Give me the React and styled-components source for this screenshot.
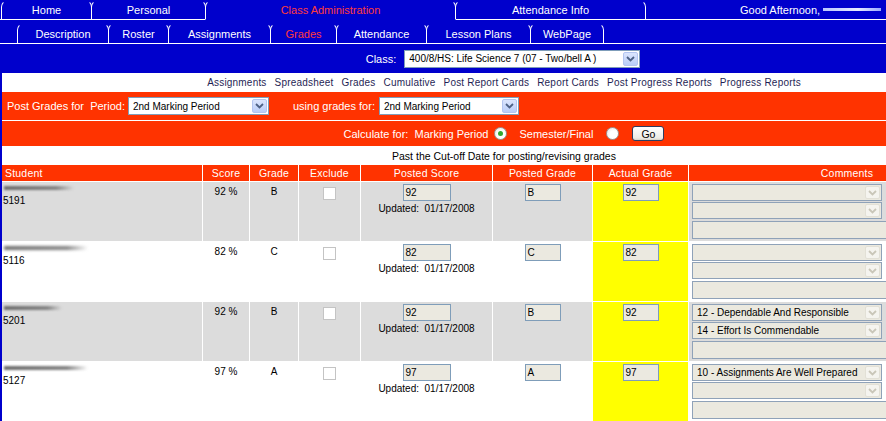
import React from "react";
import styled, { createGlobalStyle, css } from "styled-components";

const BLUE = "#0000cc";
const RED = "#ff3300";

const GlobalStyle = createGlobalStyle`
  html, body {
    margin: 0;
    padding: 0;
    background: ${BLUE};
    overflow: hidden;
  }
  body {
    font-family: "Liberation Sans", Arial, sans-serif;
  }
`;

const Page = styled.div`
  width: 1006px;
`;

const TopRow = styled.div`
  display: flex;
  height: 19px;
  padding-left: 2px;
  border-bottom: 1px solid #fff;
`;

const SubRow = styled.div`
  display: flex;
  align-items: flex-end;
  height: 23px;
  padding-left: 18px;
  border-bottom: 1px solid #fff;
`;

const Tab = styled.div`
  width: ${(p) => p.$w}px;
  height: ${(p) => p.$h}px;
  box-sizing: border-box;
  margin-left: -1px;
  border: 1px solid #fff;
  border-top-color: transparent;
  border-bottom: none;
  border-radius: 7px 7px 0 0;
  display: flex;
  align-items: center;
  justify-content: center;
  font-size: 11px;
  color: ${(p) => (p.$active ? "#ff3b3b" : "#fff")};
  white-space: nowrap;
  ${(p) =>
    p.$active &&
    p.$cover &&
    css`
      height: ${p.$h + 1}px;
      margin-bottom: -1px;
      border-bottom: 1px solid ${BLUE};
    `}
`;

const Greeting = styled.div`
  display: flex;
  align-items: center;
  margin-left: 94px;
  font-size: 11px;
  color: #fff;
  white-space: nowrap;
`;

const NameSmear = styled.span`
  display: inline-block;
  width: ${(p) => p.$w}px;
  height: 3px;
  margin-left: 3px;
  background: linear-gradient(to right, #b8c4ff, #e6ebff 60%, #9aa8ff);
  filter: blur(0.7px);
`;

const ClassBar = styled.div`
  height: 29px;
  display: flex;
  align-items: center;
  justify-content: center;
  gap: 8px;
  font-size: 11px;
  color: #fff;
`;

const Content = styled.div`
  margin-left: 2px;
  width: 1004px;
`;

const LinkBar = styled.div`
  height: 19px;
  background: #fff;
  display: flex;
  align-items: center;
  justify-content: center;
  gap: 8px;
  font-size: 10px;
  letter-spacing: 0.2px;
  color: #1f1f55;
`;

const RedBar = styled.div`
  background: ${RED};
  height: ${(p) => p.$h}px;
  display: flex;
  align-items: center;
  justify-content: ${(p) => (p.$center ? "center" : "flex-start")};
  padding-left: ${(p) => (p.$center ? 0 : 5)}px;
  font-size: 11px;
  color: #fff;
  white-space: pre;
  ${(p) => p.$line && "border-bottom: 1px solid #fff;"}
`;

const BarLabel = styled.span`
  margin-left: ${(p) => p.$ml || 0}px;
  margin-right: ${(p) => p.$mr || 0}px;
`;

const Notice = styled.div`
  height: 19px;
  background: #fff;
  display: flex;
  align-items: center;
  justify-content: center;
  font-size: 10.5px;
  color: #000;
`;

const SelectBox = styled.div`
  box-sizing: border-box;
  width: ${(p) => p.$w}px;
  height: ${(p) => p.$h}px;
  display: flex;
  align-items: center;
  border: 1px solid ${(p) => (p.$disabled ? "#8fa2b8" : "#7f9db9")};
  background: ${(p) => (p.$disabled ? "#ebe9df" : "#fff")};
  font-size: 10px;
  color: #000;
`;

const SelectText = styled.span`
  flex: 1;
  padding-left: 4px;
  white-space: nowrap;
  overflow: hidden;
`;

const ArrowBtn = styled.span`
  box-sizing: border-box;
  width: 15px;
  align-self: stretch;
  margin: 1px;
  display: flex;
  align-items: center;
  justify-content: center;
  border-radius: 2px;
  ${(p) =>
    p.$disabled
      ? css`
          background: #f5f4ef;
          border: 1px solid #e2e0d6;
        `
      : css`
          background: linear-gradient(#dbe5fd, #b9cdf8);
          border: 1px solid #b3c5f0;
        `}
`;

const Radio = styled.span`
  box-sizing: border-box;
  width: 13px;
  height: 13px;
  border-radius: 50%;
  border: 1px solid #9a9a9a;
  background: radial-gradient(circle at 60% 60%, #fff 40%, #e4e4e0);
  display: inline-flex;
  align-items: center;
  justify-content: center;
  margin: 0 ${(p) => p.$mr}px 0 ${(p) => p.$ml}px;
`;

const Dot = styled.span`
  width: 5px;
  height: 5px;
  border-radius: 50%;
  background: #2fa82f;
`;

const GoButton = styled.span`
  box-sizing: border-box;
  width: 32px;
  height: 15px;
  display: inline-flex;
  align-items: center;
  justify-content: center;
  border: 1px solid #2c3e62;
  border-radius: 3px;
  background: linear-gradient(#ffffff, #ecebe6 85%, #d6d0c5);
  font-size: 10.5px;
  color: #000;
`;

const COLS = "200px 46px 48px 61px 131px 99px 95px 316px";

const Grid = styled.div`
  display: flex;
  flex-direction: column;
  gap: 1px;
  background: #fff;
`;

const Row = styled.div`
  display: grid;
  grid-template-columns: ${COLS};
  column-gap: 1px;
  height: ${(p) => (p.$head ? 16 : 59)}px;
`;

const HeadCell = styled.div`
  background: ${RED};
  color: #fff;
  font-size: 10.5px;
  letter-spacing: 0.2px;
  display: flex;
  align-items: center;
  justify-content: ${(p) => (p.$left ? "flex-start" : "center")};
  padding-left: ${(p) => (p.$left ? 3 : 0)}px;
`;

const Cell = styled.div`
  background: ${(p) => (p.$yellow ? "#ffff00" : p.$alt ? "#dcdcdc" : "#fff")};
  font-size: 10px;
  color: #000;
  display: flex;
  flex-direction: column;
  align-items: ${(p) => (p.$left ? "flex-start" : "center")};
  padding: ${(p) => p.$pt ?? 2}px 0 0 ${(p) => (p.$left ? 1 : 0)}px;
  overflow: hidden;
`;

const NameBlur = styled.span`
  display: block;
  width: ${(p) => p.$w}px;
  height: 4px;
  margin: 4px 0 0 1px;
  background: linear-gradient(to right, #6e6e6e, #858585 75%, rgba(150, 150, 150, 0));
  filter: blur(${(p) => p.$blur}px);
`;

const StudentId = styled.span`
  margin-top: 5px;
`;

const Check = styled.span`
  box-sizing: border-box;
  width: 13px;
  height: 13px;
  margin-top: 3px;
  background: #fff;
  border: 1px solid #c4c4c4;
`;

const Field = styled.div`
  box-sizing: border-box;
  width: ${(p) => p.$w}px;
  height: 17px;
  border: 1px solid #7f9db9;
  background: #ebe9e0;
  padding-left: 2px;
  font-size: 10px;
  line-height: 15px;
  color: #000;
`;

const Updated = styled.span`
  margin-top: 2px;
  white-space: pre;
`;

const CommentStack = styled.div`
  display: flex;
  flex-direction: column;
  gap: 1px;
  padding-left: 2px;
`;

const TextBox = styled.div`
  box-sizing: border-box;
  width: 330px;
  height: 18px;
  margin-top: 1px;
  border: 1px solid #8fa2b8;
  background: #ebe9df;
`;

const Chevron = ({ disabled }) => (
  <svg width="9" height="6" viewBox="0 0 9 6">
    <path
      d="M1 1 L4.5 4.5 L8 1"
      fill="none"
      stroke={disabled ? "#c9c6b8" : "#4d6185"}
      strokeWidth="1.8"
    />
  </svg>
);

const Select = ({ w, h = 17, value, disabled }) => (
  <SelectBox $w={w} $h={h} $disabled={disabled}>
    <SelectText>{value}</SelectText>
    <ArrowBtn $disabled={disabled}>
      <Chevron disabled={disabled} />
    </ArrowBtn>
  </SelectBox>
);

const mainTabs = [
  { label: "Home", w: 91 },
  { label: "Personal", w: 115 },
  { label: "Class Administration", w: 251, active: true },
  { label: "Attendance Info", w: 191 },
];

const subTabs = [
  { label: "Description", w: 92 },
  { label: "Roster", w: 61 },
  { label: "Assignments", w: 103 },
  { label: "Grades", w: 67, active: true },
  { label: "Attendance", w: 91 },
  { label: "Lesson Plans", w: 105 },
  { label: "WebPage", w: 74 },
];

const links = [
  "Assignments",
  "Spreadsheet",
  "Grades",
  "Cumulative",
  "Post Report Cards",
  "Report Cards",
  "Post Progress Reports",
  "Progress Reports",
];

const students = [
  { id: "5191", blur: 70, soft: 0.8, score: "92 %", grade: "B", posted: "92", actual: "92", comments: ["", ""] },
  { id: "5116", blur: 84, soft: 1.4, score: "82 %", grade: "C", posted: "82", actual: "82", comments: ["", ""] },
  { id: "5201", blur: 58, soft: 0.8, score: "92 %", grade: "B", posted: "92", actual: "92", comments: ["12 - Dependable And Responsible", "14 - Effort Is Commendable"] },
  { id: "5127", blur: 84, soft: 0.8, score: "97 %", grade: "A", posted: "97", actual: "97", comments: ["10 - Assignments Are Well Prepared", ""] },
];

const headers = ["Student", "Score", "Grade", "Exclude", "Posted Score", "Posted Grade", "Actual Grade", "Comments"];

export default function App() {
  return (
    <Page>
      <GlobalStyle />
      <TopRow>
        {mainTabs.map((t) => (
          <Tab key={t.label} $w={t.w} $h={19} $active={t.active} $cover>
            {t.label}
          </Tab>
        ))}
        <Greeting>
          Good Afternoon,
          <NameSmear $w={58} />
        </Greeting>
      </TopRow>
      <SubRow>
        {subTabs.map((t) => (
          <Tab key={t.label} $w={t.w} $h={20} $active={t.active}>
            {t.label}
          </Tab>
        ))}
      </SubRow>
      <ClassBar>
        Class:
        <Select w={236} h={18} value="400/8/HS: Life Science 7 (07 - Two/bell A )" />
      </ClassBar>
      <Content>
        <LinkBar>
          {links.map((l) => (
            <span key={l}>{l}</span>
          ))}
        </LinkBar>
        <RedBar $h={28} $line>
          <BarLabel $mr={3}>{"Post Grades for  Period:"}</BarLabel>
          <Select w={141} h={18} value="2nd Marking Period" />
          <BarLabel $ml={24} $mr={4}>{"using grades for:"}</BarLabel>
          <Select w={140} h={18} value="2nd Marking Period" />
        </RedBar>
        <RedBar $h={25} $center>
          {"Calculate for:  Marking Period"}
          <Radio $ml={6} $mr={12}>
            <Dot />
          </Radio>
          Semester/Final
          <Radio $ml={13} $mr={13} />
          <GoButton>Go</GoButton>
        </RedBar>
        <Notice>Past the Cut-off Date for posting/revising grades</Notice>
        <Grid>
          <Row $head>
            {headers.map((h, i) => (
              <HeadCell key={h} $left={i === 0}>
                {h}
              </HeadCell>
            ))}
          </Row>
          {students.map((s, i) => {
            const alt = i % 2 === 0;
            return (
              <Row key={s.id}>
                <Cell $alt={alt} $left $pt={0}>
                  <NameBlur $w={s.blur} $blur={s.soft} />
                  <StudentId>{s.id}</StudentId>
                </Cell>
                <Cell $alt={alt} $pt={4}>{s.score}</Cell>
                <Cell $alt={alt} $pt={4}>{s.grade}</Cell>
                <Cell $alt={alt}>
                  <Check />
                </Cell>
                <Cell $alt={alt}>
                  <Field $w={48}>{s.posted}</Field>
                  <Updated>{"Updated:  01/17/2008"}</Updated>
                </Cell>
                <Cell $alt={alt}>
                  <Field $w={36}>{s.grade}</Field>
                </Cell>
                <Cell $yellow>
                  <Field $w={36}>{s.actual}</Field>
                </Cell>
                <Cell $alt={alt} $left>
                  <CommentStack>
                    {s.comments.map((c, k) => (
                      <Select key={k} w={190} value={c} disabled />
                    ))}
                    <TextBox />
                  </CommentStack>
                </Cell>
              </Row>
            );
          })}
        </Grid>
      </Content>
    </Page>
  );
}
